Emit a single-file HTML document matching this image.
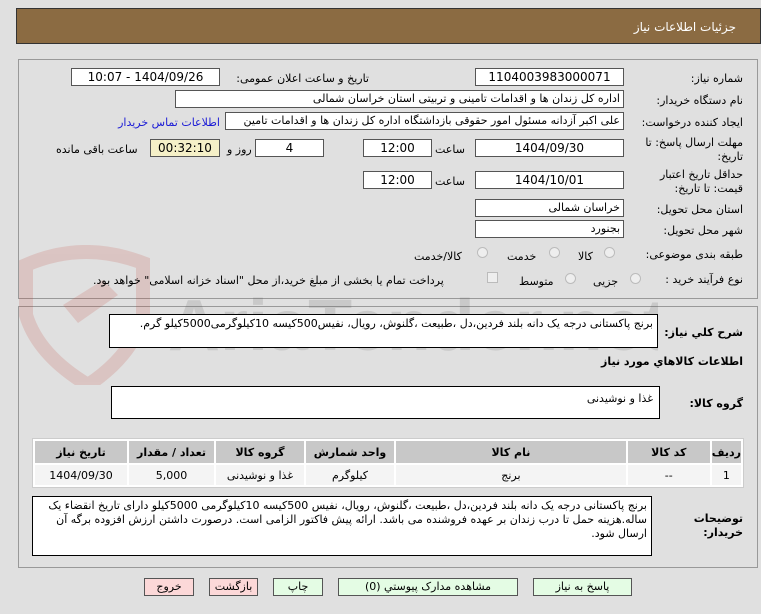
<!DOCTYPE html>
<html><head><meta charset="utf-8"><style>
*{box-sizing:border-box;margin:0;padding:0}
body{width:761px;height:614px;background:#e0e0e0;font-family:"DejaVu Sans","Liberation Sans",sans-serif;font-size:11px;color:#000;position:relative;overflow:hidden;direction:rtl}
.a{position:absolute;white-space:nowrap}
.f{position:absolute;background:#fff;border:1px solid #555;height:18px;line-height:16px;padding:0 3px;white-space:nowrap;overflow:hidden;font-size:11px}
.c{text-align:center;font-size:12px}
.lbl{position:absolute;white-space:nowrap;font-size:11px}
.r{position:absolute;width:11px;height:11px;border-radius:50%;border:1px solid #bbb;background:#eee}
.btn{position:absolute;top:578px;height:18px;border:1px solid #555;text-align:center;line-height:16px;font-size:11px}
table{border-collapse:separate;border-spacing:2px;position:absolute;left:32px;top:438px;width:712px;background:#fff;border:1px solid #ccc}
th{background:#c8c8c8;height:22px;font-size:11px}
td{background:#f4f4f4;height:20px;text-align:center;font-size:11px}
</style></head><body>
<div class="a" style="left:16px;top:8px;width:745px;height:36px;background:#8b6b42;border:1px solid #333"></div>
<div class="a" style="right:25px;top:20px;color:#fff;font-size:12px">جزئیات اطلاعات نیاز</div>
<div class="a" style="left:18px;top:59px;width:740px;height:240px;border:1px solid #999"></div>
<div class="a" style="left:18px;top:306px;width:740px;height:262px;border:1px solid #999"></div>
<svg class="a" style="left:18px;top:245px" width="640" height="140" viewBox="0 0 640 140"><g opacity="0.16"><path d="M8 20 Q65 -5 125 18 L125 70 Q115 110 70 140 Q20 110 8 70 Z" fill="none" stroke="#c0392b" stroke-width="14"/><path d="M45 60 L85 35 L100 50 L60 78 Z" fill="#c0392b"/><text x="150" y="105" font-size="72" font-weight="bold" fill="#555" font-family="Liberation Sans" direction="ltr" unicode-bidi="embed">AriaTender.net</text></g></svg>
<div class="lbl" style="right:18px;top:72px">شماره نیاز:</div>
<div class="f c" style="left:475px;top:68px;width:149px">1104003983000071</div>
<div class="lbl" style="right:392px;top:72px">تاریخ و ساعت اعلان عمومی:</div>
<div class="f c" style="left:71px;top:68px;width:149px">1404/09/26 - 10:07</div>
<div class="lbl" style="right:18px;top:94px">نام دستگاه خریدار:</div>
<div class="f" style="left:175px;top:90px;width:449px">اداره کل زندان ها و اقدامات تامینی و تربیتی استان خراسان شمالی</div>
<div class="lbl" style="right:18px;top:116px">ایجاد کننده درخواست:</div>
<div class="f" style="left:225px;top:112px;width:399px">علی اکبر  آزدانه مسئول امور حقوقی بازداشتگاه اداره کل زندان ها و اقدامات تامین</div>
<div class="lbl" style="right:541px;top:116px;color:#1a1ad6">اطلاعات تماس خریدار</div>
<div class="lbl" style="right:18px;top:136px;line-height:14px;white-space:normal;width:110px">مهلت ارسال پاسخ: تا تاریخ:</div>
<div class="f c" style="left:475px;top:139px;width:149px">1404/09/30</div>
<div class="lbl" style="left:435px;top:143px">ساعت</div>
<div class="f c" style="left:363px;top:139px;width:69px">12:00</div>
<div class="f c" style="left:255px;top:139px;width:69px">4</div>
<div class="lbl" style="left:227px;top:143px">روز و</div>
<div class="f c" style="left:150px;top:139px;width:70px;background:#f5f0c8">00:32:10</div>
<div class="lbl" style="left:56px;top:143px">ساعت باقی مانده</div>
<div class="lbl" style="right:18px;top:168px;line-height:14px;white-space:normal;width:110px">حداقل تاریخ اعتبار قیمت: تا تاریخ:</div>
<div class="f c" style="left:475px;top:171px;width:149px">1404/10/01</div>
<div class="lbl" style="left:435px;top:175px">ساعت</div>
<div class="f c" style="left:363px;top:171px;width:69px">12:00</div>
<div class="lbl" style="right:18px;top:203px">استان محل تحویل:</div>
<div class="f" style="left:475px;top:199px;width:149px">خراسان شمالی</div>
<div class="lbl" style="right:18px;top:224px">شهر محل تحویل:</div>
<div class="f" style="left:475px;top:220px;width:149px">بجنورد</div>
<div class="lbl" style="right:18px;top:248px">طبقه بندی موضوعی:</div>
<div class="r" style="left:604px;top:247px"></div><div class="lbl" style="left:578px;top:250px">کالا</div>
<div class="r" style="left:549px;top:247px"></div><div class="lbl" style="left:507px;top:250px">خدمت</div>
<div class="r" style="left:477px;top:247px"></div><div class="lbl" style="left:414px;top:250px">کالا/خدمت</div>
<div class="lbl" style="right:18px;top:273px">نوع فرآیند خرید :</div>
<div class="r" style="left:630px;top:273px"></div><div class="lbl" style="left:593px;top:275px">جزیی</div>
<div class="r" style="left:565px;top:273px"></div><div class="lbl" style="left:519px;top:275px">متوسط</div>
<div class="a" style="left:487px;top:272px;width:11px;height:11px;border:1px solid #bbb;background:#eee"></div>
<div class="lbl" style="left:93px;top:274px">پرداخت تمام یا بخشی از مبلغ خرید،از محل "اسناد خزانه اسلامی" خواهد بود.</div>
<div class="lbl" style="right:18px;top:326px;font-weight:bold">شرح کلي نیاز:</div>
<div class="a" style="left:109px;top:314px;width:549px;height:34px;background:#fff;border:1px solid #000;white-space:normal;padding:2px 4px 0 22px;font-size:11px;line-height:14px">برنج پاکستانی درجه یک دانه بلند فردین،دل ،طبیعت ،گلنوش، رویال، نفیس500کیسه 10کیلوگرمی5000کیلو گرم.</div>
<div class="lbl" style="right:18px;top:355px;font-weight:bold">اطلاعات کالاهاي مورد نیاز</div>
<div class="lbl" style="right:18px;top:397px;font-weight:bold">گروه کالا:</div>
<div class="a" style="left:111px;top:386px;width:549px;height:33px;background:#fff;border:1px solid #000;padding:5px 6px;font-size:11px">غذا و نوشیدنی</div>
<table>
<tr><th style="width:27px">ردیف</th><th style="width:82px">کد کالا</th><th>نام کالا</th><th style="width:88px">واحد شمارش</th><th style="width:88px">گروه کالا</th><th style="width:85px">تعداد / مقدار</th><th style="width:92px">تاریخ نیاز</th></tr>
<tr><td>1</td><td>--</td><td>برنج</td><td>کیلوگرم</td><td>غذا و نوشیدنی</td><td>5,000</td><td>1404/09/30</td></tr>
</table>
<div class="a" style="right:18px;top:512px;width:60px;white-space:normal;line-height:14px;font-weight:bold;font-size:11px">توضیحات خریدار:</div>
<div class="a" style="left:32px;top:496px;width:620px;height:60px;background:#fff;border:1px solid #000;white-space:normal;padding:2px 4px;font-size:11px;line-height:14px">برنج پاکستانی درجه یک دانه بلند فردین،دل ،طبیعت ،گلنوش، رویال، نفیس 500کیسه 10کیلوگرمی 5000کیلو دارای تاریخ انقضاء یک ساله.هزینه حمل تا درب زندان بر عهده فروشنده می باشد. ارائه پیش فاکتور الزامی است. درصورت داشتن ارزش افزوده برگه آن ارسال شود.</div>
<div class="btn" style="left:144px;width:50px;background:#fcd8d8">خروج</div>
<div class="btn" style="left:209px;width:49px;background:#fcd8d8">بازگشت</div>
<div class="btn" style="left:273px;width:50px;background:#e4fce4">چاپ</div>
<div class="btn" style="left:338px;width:180px;background:#e4fce4">مشاهده مدارک پیوستي (0)</div>
<div class="btn" style="left:533px;width:99px;background:#e4fce4">پاسخ به نیاز</div>
</body></html>
